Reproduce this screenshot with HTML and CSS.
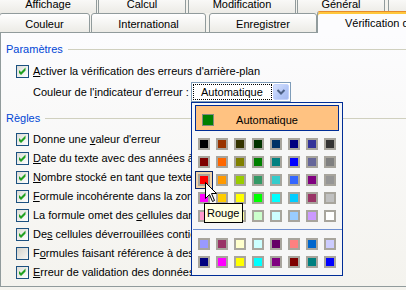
FILE: index.html
```html
<!DOCTYPE html>
<html lang="fr">
<head>
<meta charset="utf-8">
<title>Vérification des erreurs</title>
<link rel="stylesheet" href="styles.css">
</head>
<body>
<div class="dialog">
  <div class="tabrow back">
    <div class="tab w-affichage">Affichage</div>
    <div class="tab w-calcul">Calcul</div>
    <div class="tab w-modif">Modification</div>
    <div class="tab w-general">Général</div>
    <div class="tab w-more"></div>
  </div>
  <div class="tabrow front">
    <div class="tab w-couleur">Couleur</div>
    <div class="tab w-intl">International</div>
    <div class="tab w-enreg">Enregistrer</div>
    <div class="tab active">Vérification des erreurs</div>
  </div>
  <div class="page">
    <div class="group-title"><span>Paramètres</span><i class="line"></i></div>
    <div class="check-row first">
      <span class="cb"><svg viewBox="0 0 11 11" width="11" height="11"><polygon points="2,4 4,6 8.5,1.5 8.5,4.5 4,9 2,7" fill="#21A121"/></svg></span>
      <span><u>A</u>ctiver la vérification des erreurs d'arrière-plan</span>
    </div>
    <div class="color-row">
      <span class="label">Couleur de l'<u>i</u>ndicateur d'erreur :</span>
      <div class="combo">
        <span class="combo-value">Automatique</span>
        <span class="combo-btn"><svg viewBox="0 0 16 16" width="16" height="16"><polyline points="4.5,6 8,9.5 11.5,6" fill="none" stroke="#4D6185" stroke-width="2"/></svg></span>
        <div class="popup">
          <div class="auto"><span class="auto-sq"></span><span class="auto-text">Automatique</span></div>
          <div class="swatches">
            <span class="sw" style="background:#000000"></span><span class="sw" style="background:#993300"></span><span class="sw" style="background:#333300"></span><span class="sw" style="background:#003300"></span><span class="sw" style="background:#003366"></span><span class="sw" style="background:#000080"></span><span class="sw" style="background:#333399"></span><span class="sw" style="background:#333333"></span>
            <span class="sw" style="background:#800000"></span><span class="sw" style="background:#FF6600"></span><span class="sw" style="background:#808000"></span><span class="sw" style="background:#008000"></span><span class="sw" style="background:#008080"></span><span class="sw" style="background:#0000FF"></span><span class="sw" style="background:#666699"></span><span class="sw" style="background:#808080"></span>
            <span class="sw selected" style="background:#FF0000"></span><span class="sw" style="background:#FF9900"></span><span class="sw" style="background:#99CC00"></span><span class="sw" style="background:#339966"></span><span class="sw" style="background:#33CCCC"></span><span class="sw" style="background:#3366FF"></span><span class="sw" style="background:#800080"></span><span class="sw" style="background:#969696"></span>
            <span class="sw" style="background:#FF00FF"></span><span class="sw" style="background:#FFCC00"></span><span class="sw" style="background:#FFFF00"></span><span class="sw" style="background:#00FF00"></span><span class="sw" style="background:#00FFFF"></span><span class="sw" style="background:#00CCFF"></span><span class="sw" style="background:#993366"></span><span class="sw" style="background:#C0C0C0"></span>
            <span class="sw" style="background:#FF99CC"></span><span class="sw" style="background:#FFCC99"></span><span class="sw" style="background:#FFFF99"></span><span class="sw" style="background:#CCFFCC"></span><span class="sw" style="background:#CCFFFF"></span><span class="sw" style="background:#99CCFF"></span><span class="sw" style="background:#CC99FF"></span><span class="sw" style="background:#FFFFFF"></span>
          </div>
          <div class="sep"></div>
          <div class="swatches second">
            <span class="sw" style="background:#9999FF"></span><span class="sw" style="background:#993366"></span><span class="sw" style="background:#FFFFCC"></span><span class="sw" style="background:#CCFFFF"></span><span class="sw" style="background:#660066"></span><span class="sw" style="background:#FF8080"></span><span class="sw" style="background:#0066CC"></span><span class="sw" style="background:#CCCCFF"></span>
            <span class="sw" style="background:#000080"></span><span class="sw" style="background:#FF00FF"></span><span class="sw" style="background:#FFFF00"></span><span class="sw" style="background:#00FFFF"></span><span class="sw" style="background:#800080"></span><span class="sw" style="background:#800000"></span><span class="sw" style="background:#008080"></span><span class="sw" style="background:#0000FF"></span>
          </div>
        </div>
      </div>
    </div>
    <div class="group-title rules-title"><span>Règles</span><i class="line"></i></div>
    <div class="rules">
      <div class="check-row"><span class="cb"><svg viewBox="0 0 11 11" width="11" height="11"><polygon points="2,4 4,6 8.5,1.5 8.5,4.5 4,9 2,7" fill="#21A121"/></svg></span><span>Donne une <u>v</u>aleur d'erreur</span></div>
      <div class="check-row"><span class="cb"><svg viewBox="0 0 11 11" width="11" height="11"><polygon points="2,4 4,6 8.5,1.5 8.5,4.5 4,9 2,7" fill="#21A121"/></svg></span><span><u>D</u>ate du texte avec des années à 2 chiffres</span></div>
      <div class="check-row"><span class="cb"><svg viewBox="0 0 11 11" width="11" height="11"><polygon points="2,4 4,6 8.5,1.5 8.5,4.5 4,9 2,7" fill="#21A121"/></svg></span><span><u>N</u>ombre stocké en tant que texte</span></div>
      <div class="check-row"><span class="cb"><svg viewBox="0 0 11 11" width="11" height="11"><polygon points="2,4 4,6 8.5,1.5 8.5,4.5 4,9 2,7" fill="#21A121"/></svg></span><span><u>F</u>ormule incohérente dans la zone</span></div>
      <div class="check-row"><span class="cb"><svg viewBox="0 0 11 11" width="11" height="11"><polygon points="2,4 4,6 8.5,1.5 8.5,4.5 4,9 2,7" fill="#21A121"/></svg></span><span>La formule omet des <u>c</u>ellules dans la zone</span></div>
      <div class="check-row"><span class="cb"><svg viewBox="0 0 11 11" width="11" height="11"><polygon points="2,4 4,6 8.5,1.5 8.5,4.5 4,9 2,7" fill="#21A121"/></svg></span><span>De<u>s</u> cellules déverrouillées contiennent des formules</span></div>
      <div class="check-row"><span class="cb empty"></span><span>F<u>o</u>rmules faisant référence à des cellules vides</span></div>
      <div class="check-row"><span class="cb"><svg viewBox="0 0 11 11" width="11" height="11"><polygon points="2,4 4,6 8.5,1.5 8.5,4.5 4,9 2,7" fill="#21A121"/></svg></span><span><u>E</u>rreur de validation des données de liste</span></div>
    </div>
  </div>
</div>
<div class="tooltip">Rouge</div>
<svg class="cursor" viewBox="0 0 13 21" width="13" height="21"><path d="M0.5,0.5 V16.5 L4.5,12.5 L7.5,19.5 L9.5,18.5 L6.5,11.5 H11.5 Z" fill="#fff" stroke="#000" stroke-width="1" stroke-linejoin="miter"/></svg>
</body>
</html>
```

FILE: styles.css
```css
* { box-sizing: border-box; }
html, body { margin: 0; padding: 0; }
body {
  width: 406px;
  height: 290px;
  overflow: hidden;
  position: relative;
  background: #F4F3EE;
  font: 11px/13px "Liberation Sans", Arial, sans-serif;
  color: #000;
}
u { text-decoration: underline; text-underline-offset: 1px; }

.dialog { width: 406px; height: 290px; overflow: hidden; }

.tabrow { display: flex; white-space: nowrap; }
.back { margin-top: -7px; height: 20px; margin-bottom: -2px; }
.front {
  height: 22px;
  align-items: flex-end;
  background: linear-gradient(to top, #919B9C 1px, transparent 1px);
}
.tab {
  flex: none;
  height: 20px;
  border: 1px solid #919B9C;
  border-bottom: none;
  border-radius: 3px 3px 0 0;
  background: linear-gradient(#FFFFFF, #ECEBE6);
  text-align: center;
  padding-top: 4px;
}
.front .tab { border-bottom: 1px solid #919B9C; }
.front .tab.active {
  height: 22px;
  width: 100px;
  border-top: 1px solid #E68B2C;
  border-bottom: none;
  border-right: none;
  background: #FCFCFE;
  box-shadow: inset 0 2px 0 #FFC73C;
  text-align: left;
  padding: 5px 0 0 27px;
}
.w-affichage { margin-left: -1px; width: 98px; }
.w-calcul { margin-left: 1px; width: 88px; }
.w-modif { margin-left: 2px; width: 108px; }
.w-general { margin-left: 1px; width: 88px; }
.w-more { margin-left: 3px; width: 40px; }
.w-couleur { margin-left: -1px; width: 91px; }
.w-intl { margin-left: 1px; width: 115px; }
.w-enreg { margin-left: 3px; width: 108px; }

.page {
  position: relative;
  height: 254px;
  border-left: 1px solid #919B9C;
  border-bottom: 1px solid #919B9C;
  background: linear-gradient(#FCFCFE, #F4F3EE);
  padding: 10px 0 0 5px;
}

.group-title {
  display: flex;
  align-items: center;
  height: 13px;
  color: #0046D5;
  white-space: nowrap;
}
.group-title .line {
  flex: 1;
  height: 1px;
  background: #D0D0BF;
  margin-left: 5px;
}
.rules-title { margin-top: 10px; }

.rules {
  display: flex;
  flex-direction: column;
  gap: 6px;
  margin-top: 8px;
}

.check-row {
  display: flex;
  align-items: center;
  height: 13px;
  margin-left: 10px;
  gap: 4px;
  white-space: nowrap;
}
.check-row.first { margin-top: 9px; }

.cb {
  flex: none;
  width: 13px;
  height: 13px;
  border: 1px solid #1C5180;
  background: linear-gradient(135deg, #DCDCD7, #FFFFFF);
  display: block;
}
.cb svg { display: block; }
.cb.empty { background: linear-gradient(135deg, #D3D2CB, #F7F7F4); }

.color-row {
  display: flex;
  align-items: center;
  height: 20px;
  margin: 4px 0 0 27px;
  white-space: nowrap;
}
.label { width: 158px; flex: none; }

.combo {
  position: relative;
  display: flex;
  gap: 1px;
  width: 100px;
  height: 20px;
  border: 1px solid #7F9DB9;
  background: #FFFFFF;
  padding: 1px;
}
.combo-value {
  width: 79px;
  height: 16px;
  border: 1px dotted #000;
  padding-left: 7px;
  line-height: 14px;
}
.combo-btn {
  width: 16px;
  height: 16px;
  border-radius: 2px;
  background: linear-gradient(135deg, #D6E1FD, #B2C6F6 60%, #A6BAF0);
  border: 1px solid #C3D3FD;
}
.combo-btn svg { display: block; margin: -1px; }

.popup {
  position: absolute;
  left: -1px;
  top: 19px;
  z-index: 5;
  width: 152px;
  height: 174px;
  border: 1px solid #002D96;
  background: #F6F6F6;
  padding: 2px 3px 0;
}
.auto {
  height: 26px;
  border: 1px solid #002D96;
  background: #FFC281;
  display: flex;
  align-items: flex-start;
  padding-top: 8px;
}
.auto-sq {
  flex: none;
  width: 12px;
  height: 12px;
  margin-left: 6px;
  border: 1px solid #7E8A7E;
  background: #008000;
}
.auto-text {
  flex: 1;
  text-align: center;
  margin-right: 18px;
}
.swatches {
  display: grid;
  grid-template-columns: repeat(8, 12px);
  gap: 6px;
  margin: 7px 0 0 3px;
}
.swatches.second { margin-top: 8px; }
.sw {
  display: block;
  width: 12px;
  height: 12px;
  border: 2px solid #A8A59D;
}
.sw.selected { box-shadow: 0 0 0 2px #F0D3A8, 0 0 0 3px #0A246A; }
.sep {
  height: 1px;
  background: #6F8FCF;
  margin: 7px -3px 0 -2px;
}

.tooltip {
  position: absolute;
  left: 204px;
  top: 203px;
  z-index: 20;
  width: 39px;
  height: 20px;
  border: 1px solid #000;
  background: #FFFFE1;
  padding: 3px 0 0 2px;
  white-space: nowrap;
}
.cursor {
  position: absolute;
  left: 205px;
  top: 182px;
  z-index: 30;
  display: block;
}
```
